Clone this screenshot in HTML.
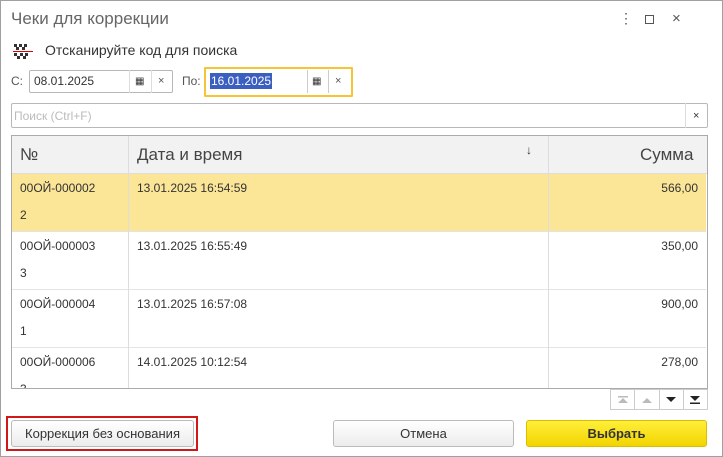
<!DOCTYPE html><html><head><meta charset="utf-8"><style>
*{box-sizing:border-box;margin:0;padding:0}
body{width:723px;height:457px;background:#fff;font-family:"Liberation Sans",Arial,sans-serif;font-size:12px;color:#333;position:relative;overflow:hidden}
.a{position:absolute}
.win{left:0;top:0;width:723px;height:457px;border:1px solid #a0a0a0}
.f{border:1px solid #b8b8b8;border-radius:2px;background:#fff}
.row{position:absolute;left:12px;width:694px;height:58px;border-bottom:1px solid #e4e4e4}
.row span{position:absolute;font-size:12px;color:#333}
.btn{position:absolute;border:1px solid #bbb;border-radius:3px;background:linear-gradient(#fff,#ececec);text-align:center;line-height:25px;font-size:13px}
.nb{flex:1;border-right:1px solid #ccc;display:flex;align-items:center;justify-content:center}
</style></head><body>
<div class="a win"></div>
<div class="a" style="left:11px;top:9px;font-size:17px;color:#666">Чеки для коррекции</div>
<div class="a" style="left:619px;top:10px;font-size:14px;color:#555">⋮</div>
<div class="a" style="left:645px;top:15px;width:9px;height:9px;border:1px solid #555"></div>
<div class="a" style="left:672px;top:10px;font-size:15px;color:#555">×</div>
<svg class="a" style="left:13px;top:43px" width="20" height="16"><g fill="#333"><rect x="1" y="1" width="3" height="3"/><rect x="6" y="1" width="3" height="3"/><rect x="11" y="1" width="3" height="3"/><rect x="3" y="4" width="3" height="3"/><rect x="9" y="4" width="3" height="3"/><rect x="1" y="10" width="3" height="3"/><rect x="7" y="10" width="3" height="3"/><rect x="12" y="10" width="3" height="3"/><rect x="4" y="13" width="3" height="3"/><rect x="10" y="13" width="3" height="3"/></g><rect x="0" y="8" width="20" height="1" fill="#d00"/></svg>
<div class="a" style="left:45px;top:42px;font-size:14px;color:#333">Отсканируйте код для поиска</div>
<div class="a" style="left:11px;top:74px;color:#555">С:</div>
<div class="a f" style="left:29px;top:70px;width:144px;height:23px"></div>
<div class="a" style="left:34px;top:74px">08.01.2025</div>
<div class="a" style="left:129px;top:70px;width:1px;height:23px;background:#ddd"></div>
<div class="a" style="left:151px;top:70px;width:1px;height:23px;background:#ddd"></div>
<div class="a" style="left:135px;top:76px;font-size:10px">▦</div>
<div class="a" style="left:158px;top:75px;font-size:11px;color:#555">×</div>
<div class="a" style="left:182px;top:74px;color:#555">По:</div>
<div class="a" style="left:204px;top:67px;width:149px;height:30px;border:2px solid #f5c536;border-radius:1px"></div>
<div class="a" style="left:210px;top:73px;background:#3b5fc0;color:#fff;padding:0 1px;line-height:16px">16.01.2025</div>
<div class="a" style="left:307px;top:70px;width:1px;height:23px;background:#ccc"></div>
<div class="a" style="left:328px;top:70px;width:1px;height:23px;background:#ccc"></div>
<div class="a" style="left:312px;top:76px;font-size:10px">▦</div>
<div class="a" style="left:335px;top:75px;font-size:11px;color:#555">×</div>
<div class="a f" style="left:11px;top:103px;width:697px;height:25px"></div>
<div class="a" style="left:14px;top:109px;color:#bbb">Поиск (Ctrl+F)</div>
<div class="a" style="left:685px;top:103px;width:1px;height:25px;background:#ddd"></div>
<div class="a" style="left:693px;top:110px;font-size:11px">×</div>
<div class="a" style="left:11px;top:135px;width:697px;height:254px;border:1px solid #aaa"></div>
<div class="a" style="left:12px;top:136px;width:695px;height:38px;background:#f2f2f2;border-bottom:1px solid #ddd"></div>
<div class="row" style="top:174px;background:#fbe597"><span style="left:8px;top:7px">00ОЙ-000002</span><span style="left:8px;top:34px">2</span><span style="left:125px;top:7px">13.01.2025 16:54:59</span><span style="right:8px;top:7px">566,00</span></div>
<div class="row" style="top:232px"><span style="left:8px;top:7px">00ОЙ-000003</span><span style="left:8px;top:34px">3</span><span style="left:125px;top:7px">13.01.2025 16:55:49</span><span style="right:8px;top:7px">350,00</span></div>
<div class="row" style="top:290px"><span style="left:8px;top:7px">00ОЙ-000004</span><span style="left:8px;top:34px">1</span><span style="left:125px;top:7px">13.01.2025 16:57:08</span><span style="right:8px;top:7px">900,00</span></div>
<div class="row" style="top:348px;height:40px;border:0;overflow:hidden"><span style="left:8px;top:7px">00ОЙ-000006</span><span style="left:8px;top:34px">3</span><span style="left:125px;top:7px">14.01.2025 10:12:54</span><span style="right:8px;top:7px">278,00</span></div>
<div class="a" style="left:128px;top:136px;width:1px;height:252px;background:#ddd"></div>
<div class="a" style="left:548px;top:136px;width:1px;height:252px;background:#ddd"></div>
<div class="a" style="left:20px;top:145px;font-size:17px;color:#444">№</div>
<div class="a" style="left:137px;top:145px;font-size:17px;color:#444">Дата и время</div>
<div class="a" style="left:526px;top:143px;font-size:12px">↓</div>
<div class="a" style="left:640px;top:145px;font-size:17px;color:#444">Сумма</div>
<div class="a" style="left:610px;top:389px;width:98px;height:21px;border:1px solid #ccc;display:flex">
<div class="nb"><svg width="10" height="8"><rect x="0" y="0" width="10" height="1.5" fill="#bbb"/><path d="M0 7L5 2L10 7Z" fill="#bbb"/></svg></div>
<div class="nb"><svg width="10" height="8"><path d="M0 7L5 2L10 7Z" fill="#bbb"/></svg></div>
<div class="nb"><svg width="10" height="8"><path d="M0 1L5 6L10 1Z" fill="#222"/></svg></div>
<div class="nb" style="border:0"><svg width="10" height="8"><path d="M0 0L5 5L10 0Z" fill="#222"/><rect x="0" y="6.5" width="10" height="1.5" fill="#222"/></svg></div></div>
<div class="a" style="left:6px;top:416px;width:192px;height:35px;border:2px solid #d01818"></div>
<div class="btn" style="left:11px;top:420px;width:183px;height:27px">Коррекция без основания</div>
<div class="btn" style="left:333px;top:420px;width:181px;height:27px">Отмена</div>
<div class="btn" style="left:526px;top:420px;width:181px;height:27px;background:linear-gradient(#ffef3a,#f2d400);border-color:#d8c000;font-weight:bold;color:#333">Выбрать</div>
</body></html>
